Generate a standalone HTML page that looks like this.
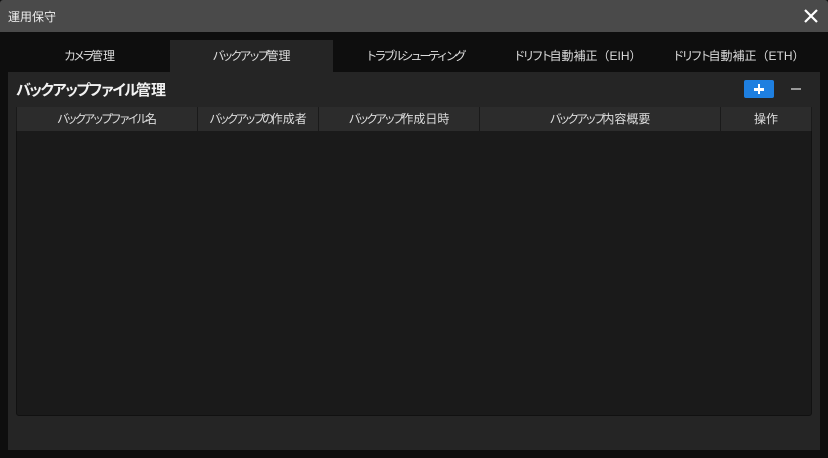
<!DOCTYPE html>
<html><head><meta charset="utf-8"><style>
*{margin:0;padding:0;box-sizing:border-box}
body{width:828px;height:458px;background:#0e0e0e;font-family:"Liberation Sans","Noto Sans CJK JP",sans-serif;color:#e6e6e6;position:relative;overflow:hidden}
.title{position:absolute;left:0;top:0;width:828px;height:32px;background:#4a4a4a;border-radius:3px 3px 0 0}
.title span{position:absolute;left:8px;top:8px;font-size:12px;color:#eee}
.close{position:absolute;left:803px;top:8px;width:16px;height:16px}
.tab{position:absolute;top:40px;height:32px;width:163px;text-align:center;font-size:12px;line-height:32px;color:#ddd;letter-spacing:-3px}
.tab.act{background:#252525}
i{font-style:normal;letter-spacing:0}
.panel{position:absolute;left:8px;top:72px;width:812px;height:378px;background:#252525}
h1{position:absolute;left:16px;top:79px;font-size:15px;font-weight:bold;color:#f2f2f2;letter-spacing:-3px}
.plus{position:absolute;left:744px;top:80px;width:30px;height:18px;background:#1e7fe0;border-radius:2px}
.plus:before{content:"";position:absolute;left:10px;top:8px;width:10px;height:2.5px;background:#fff}
.plus:after{content:"";position:absolute;left:13.7px;top:4px;width:2.5px;height:10px;background:#fff}
.minus{position:absolute;left:791px;top:88px;width:10px;height:2px;background:#999}
.table{position:absolute;left:16px;top:107px;width:796px;height:309px;background:#1a1a1a;border:1px solid #111;border-radius:3px}
.hd{position:absolute;top:107px;height:24px;background:#2c2c2c;border-right:1px solid #1a1a1a;border-left:1px solid #1a1a1a;text-align:center;font-size:12px;line-height:24px;color:#ddd;letter-spacing:-3.2px}
</style></head><body>
<div class="title"><span>運用保守</span>
<svg class="close" viewBox="0 0 16 16"><path d="M2 2L14 14M14 2L2 14" stroke="#fff" stroke-width="2.2"/></svg></div>
<div class="tab" style="left:8px">カメラ<i>管理</i></div>
<div class="tab act" style="left:170px">バックアップ<i>管理</i></div>
<div class="tab" style="left:333px">トラブルシューティング</div>
<div class="tab" style="left:496px">ドリフト<i>自動補正（EIH）</i></div>
<div class="tab" style="left:657px">ドリフト<i>自動補正（ETH）</i></div>
<div class="panel"></div>
<h1>バックアップファイル<i>管理</i></h1>
<div class="plus"></div><div class="minus"></div>
<div class="table"></div>
<div class="hd" style="left:16px;width:182px">バックアップファイル<i>名</i></div>
<div class="hd" style="left:197px;width:122px">バックアップの<i>作成者</i></div>
<div class="hd" style="left:318px;width:162px">バックアップ<i>作成日時</i></div>
<div class="hd" style="left:479px;width:242px">バックアップ<i>内容概要</i></div>
<div class="hd" style="left:720px;width:92px"><i>操作</i></div>
</body></html>
